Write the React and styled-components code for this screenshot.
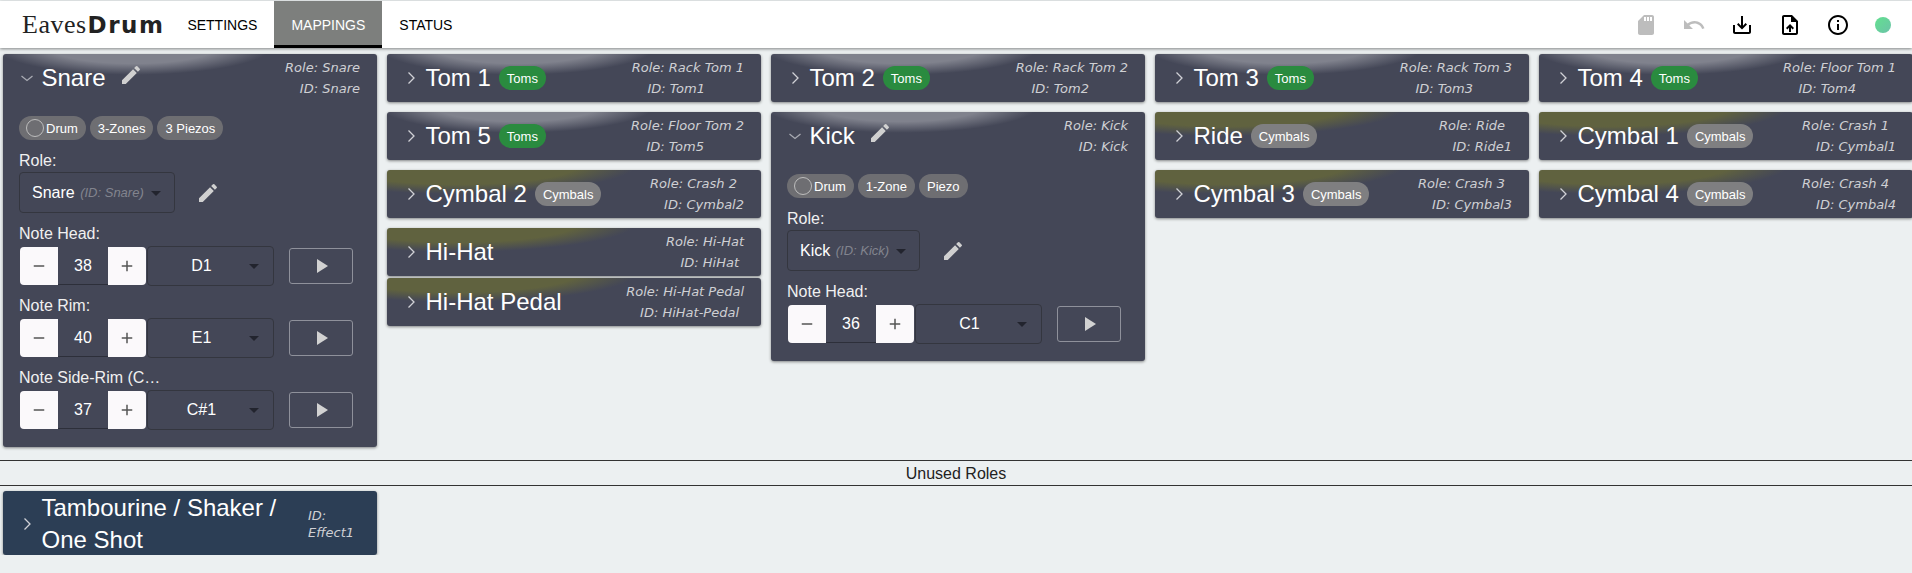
import React from 'react'
import styled, { createGlobalStyle } from 'styled-components'

const paths = {
  edit: 'M3 17.25V21h3.75L17.81 9.94l-3.75-3.75L3 17.25zM20.71 7.04c.39-.39.39-1.02 0-1.41l-2.34-2.34a.9959.9959 0 0 0-1.41 0l-1.83 1.83 3.75 3.75 1.83-1.83z',
  sd: 'M18 2h-8L4.02 8 4 20c0 1.1.9 2 2 2h12c1.1 0 2-.9 2-2V4c0-1.1-.9-2-2-2zm-6 6h-2V4h2v4zm3 0h-2V4h2v4zm3 0h-2V4h2v4z',
  undo: 'M12.5 8c-2.65 0-5.05.99-6.9 2.6L2 7v9h9l-3.62-3.62c1.39-1.16 3.16-1.88 5.12-1.88 3.54 0 6.55 2.31 7.6 5.5l2.37-.78C21.08 11.03 17.15 8 12.5 8z',
  save: 'M19 12v7H5v-7H3v7c0 1.1.9 2 2 2h14c1.1 0 2-.9 2-2v-7h-2zm-6 .67l2.59-2.58L17 11.5l-5 5-5-5 1.41-1.41L11 12.67V3h2v9.67z',
  upload: 'M14 2H6c-1.1 0-1.99.9-1.99 2L4 20c0 1.1.89 2 1.99 2H18c1.1 0 2-.9 2-2V8l-6-6zm4 18H6V4h7v5h5v11zM8 15.01l1.41 1.41L11 14.84V19h2v-4.16l1.59 1.59L16 15.01 12.01 11 8 15.01z',
  info: 'M11 7h2v2h-2zm0 4h2v6h-2zm1-9C6.48 2 2 6.48 2 12s4.48 10 10 10 10-4.48 10-10S17.52 2 12 2zm0 18c-4.41 0-8-3.59-8-8s3.59-8 8-8 8 3.59 8 8-3.59 8-8 8z',
  play: 'M8 5v14l11-7z',
  drop: 'M7 10l5 5 5-5z',
  plus: 'M19 13h-6v6h-2v-6H5v-2h6V5h2v6h6v2z',
  minus: 'M19 13H5v-2h14v2z',
}

const Icon = ({ name, size = 24, color = 'currentColor' }) => (
  <svg width={size} height={size} viewBox="0 0 24 24" fill={color}>
    <path d={paths[name]} />
  </svg>
)

const Chevron = ({ open }) => (
  <svg width="16" height="16" viewBox="0 0 16 16" fill="none" stroke={open ? '#a9abb3' : '#d0d1d6'} strokeWidth="1.3">
    <path d={open ? 'M2.5 6 L8 10.5 L13.5 6' : 'M5.5 2.5 L11 8 L5.5 13.5'} />
  </svg>
)

const toms = 'Toms'
const cymbals = 'Cymbals'

const columns = [
  [
    {
      title: 'Snare', role: 'Snare', id: 'Snare', open: true, zones: '3-Zones', piezos: '3 Piezos',
      notes: [
        { label: 'Note Head:', value: 38, name: 'D1' },
        { label: 'Note Rim:', value: 40, name: 'E1' },
        { label: 'Note Side-Rim (C…', value: 37, name: 'C#1' },
      ],
    },
  ],
  [
    { title: 'Tom 1', chip: toms, role: 'Rack Tom 1', id: 'Tom1', idGap: 39 },
    { title: 'Tom 5', chip: toms, role: 'Floor Tom 2', id: 'Tom5', idGap: 40 },
    { title: 'Cymbal 2', chip: cymbals, role: 'Crash 2', id: 'Cymbal2', roleGap: 7 },
    { title: 'Hi-Hat', olive: true, role: 'Hi-Hat', id: 'HiHat', idGap: 5, tight: true },
    { title: 'Hi-Hat Pedal', olive: true, role: 'Hi-Hat Pedal', id: 'HiHat-Pedal', idGap: 5 },
  ],
  [
    { title: 'Tom 2', chip: toms, role: 'Rack Tom 2', id: 'Tom2', idGap: 39 },
    {
      title: 'Kick', role: 'Kick', id: 'Kick', open: true, zones: '1-Zone', piezos: 'Piezo',
      notes: [{ label: 'Note Head:', value: 36, name: 'C1' }],
    },
  ],
  [
    { title: 'Tom 3', chip: toms, role: 'Rack Tom 3', id: 'Tom3', idGap: 39 },
    { title: 'Ride', chip: cymbals, role: 'Ride', id: 'Ride1', roleGap: 7 },
    { title: 'Cymbal 3', chip: cymbals, role: 'Crash 3', id: 'Cymbal3', roleGap: 7 },
  ],
  [
    { title: 'Tom 4', chip: toms, role: 'Floor Tom 1', id: 'Tom4', idGap: 40 },
    { title: 'Cymbal 1', chip: cymbals, role: 'Crash 1', id: 'Cymbal1', roleGap: 7 },
    { title: 'Cymbal 4', chip: cymbals, role: 'Crash 4', id: 'Cymbal4', roleGap: 7 },
  ],
]

const NoteRow = ({ note }) => (
  <NoteBlock>
    <Label>{note.label}</Label>
    <Controls>
      <Stepper>
        <StepButton><Icon name="minus" size={18} color="#555" /></StepButton>
        <StepValue>{note.value}</StepValue>
        <StepButton><Icon name="plus" size={18} color="#555" /></StepButton>
      </Stepper>
      <NoteSelect>
        <span>{note.name}</span>
        <DropArrow><Icon name="drop" color="#22242e" /></DropArrow>
      </NoteSelect>
      <PlayButton><Icon name="play" color="#d2d2d2" /></PlayButton>
    </Controls>
  </NoteBlock>
)

const Card = ({ item }) => {
  const isCymbal = item.chip === cymbals || item.olive
  return (
    <CardBox $olive={isCymbal} $tight={item.tight}>
      <CardHead>
        <ChevronBox><Chevron open={item.open} /></ChevronBox>
        <Title>{item.title}</Title>
        {item.open && <TitleEdit><Icon name="edit" color="#d0d0d0" /></TitleEdit>}
        {item.chip && <Chip $green={item.chip === toms}>{item.chip}</Chip>}
        <Meta>
          <MetaLine $gap={item.roleGap}>Role: {item.role}</MetaLine>
          <MetaLine $gap={item.idGap}>ID: {item.id}</MetaLine>
        </Meta>
      </CardHead>
      {item.open && (
        <CardBody>
          <Chips>
            <DetailChip>
              <Ring />
              Drum
            </DetailChip>
            <DetailChip>{item.zones}</DetailChip>
            <DetailChip>{item.piezos}</DetailChip>
          </Chips>
          <Label>Role:</Label>
          <RoleRow>
            <RoleSelect>
              {item.role} <RoleHint>(ID: {item.id})</RoleHint>
              <RoleArrow><Icon name="drop" color="#22242e" /></RoleArrow>
            </RoleSelect>
            <Icon name="edit" color="#d0d0d0" />
          </RoleRow>
          {item.notes.map((note) => (
            <NoteRow key={note.label} note={note} />
          ))}
        </CardBody>
      )}
    </CardBox>
  )
}

export default function App() {
  return (
    <>
      <GlobalStyle />
      <TopBar>
        <Logo>
          <LogoLight>Eaves</LogoLight>
          <LogoBold>Drum</LogoBold>
        </Logo>
        <Tab>Settings</Tab>
        <Tab $active>Mappings</Tab>
        <Tab>Status</Tab>
        <Tools>
          <Tool><Icon name="sd" color="#bdbdbd" /></Tool>
          <Tool><Icon name="undo" color="#bdbdbd" /></Tool>
          <Tool><Icon name="save" color="#000" /></Tool>
          <Tool><Icon name="upload" color="#000" /></Tool>
          <Tool><Icon name="info" color="#000" /></Tool>
          <Led />
        </Tools>
      </TopBar>
      <Board>
        {columns.map((col, i) => (
          <Column key={i}>
            {col.map((item) => (
              <Card key={item.title} item={item} />
            ))}
          </Column>
        ))}
      </Board>
      <Divider>Unused Roles</Divider>
      <Unused>
        <EffectCard>
          <ChevronBox><Chevron /></ChevronBox>
          <EffectTitle>Tambourine / Shaker / One Shot</EffectTitle>
          <EffectMeta>ID: Effect1</EffectMeta>
        </EffectCard>
      </Unused>
    </>
  )
}

const GlobalStyle = createGlobalStyle`
  html, body {
    margin: 0;
    padding: 0;
    background: #ecf0f1;
    font-family: "Liberation Sans", Arial, sans-serif;
  }
`

const TopBar = styled.header`
  display: flex;
  align-items: stretch;
  height: 47px;
  margin-top: 1px;
  background: #fff;
  box-shadow: 0 1px 3px rgba(0, 0, 0, 0.45);
`

const Logo = styled.div`
  display: flex;
  align-items: center;
  margin-left: 22px;
  margin-right: 6px;
  color: #222;
`

const LogoLight = styled.span`
  font-family: "Liberation Serif", serif;
  font-size: 26px;
  letter-spacing: 0.5px;
`

const LogoBold = styled.span`
  font-family: "DejaVu Sans", sans-serif;
  font-weight: 700;
  font-size: 23px;
  letter-spacing: 1.5px;
  margin-left: 1px;
`

const Tab = styled.div`
  display: flex;
  align-items: center;
  padding: 3px 17px 0;
  font-size: 14px;
  text-transform: uppercase;
  color: ${(p) => (p.$active ? '#fff' : '#000')};
  background: ${(p) => (p.$active ? '#7d7f7d' : 'transparent')};
  border-bottom: 3px solid ${(p) => (p.$active ? '#000' : 'transparent')};
  box-sizing: border-box;
`

const Tools = styled.div`
  display: flex;
  align-items: center;
  margin-left: auto;
  padding-right: 21px;
`

const Tool = styled.div`
  display: flex;
  align-items: center;
  justify-content: center;
  width: 48px;
`

const Led = styled.div`
  width: 16px;
  height: 16px;
  margin-left: 13px;
  border-radius: 50%;
  background: linear-gradient(135deg, #62e08f, #6cc3a8);
`

const Board = styled.main`
  display: grid;
  grid-template-columns: repeat(5, 374px);
  column-gap: 10px;
  align-items: start;
  padding: 6px 0 3px 3px;
`

const Column = styled.div`
  display: flex;
  flex-direction: column;
`

const CardBox = styled.section`
  margin-bottom: ${(p) => (p.$tight ? '2px' : '10px')};
  border-radius: 3px;
  color: #fff;
  background-color: #444757;
  background-image: ${(p) =>
    p.$olive
      ? 'radial-gradient(ellipse 205px 34px at 70px -6px, #60623f 60%, rgba(96, 98, 63, 0) 88%)'
      : 'radial-gradient(ellipse 155px 32px at 130px -8px, #80828d 55%, rgba(128, 130, 141, 0) 90%)'};
  background-repeat: no-repeat;
  box-shadow: 0 1px 3px rgba(0, 0, 0, 0.45);
`

const CardHead = styled.div`
  display: flex;
  align-items: center;
  height: 48px;
  padding: 0 17px 0 16px;
`

const ChevronBox = styled.div`
  display: flex;
  width: 22.5px;
  flex: none;
`

const Title = styled.div`
  font-size: 24px;
  white-space: nowrap;
`

const TitleEdit = styled.div`
  display: flex;
  margin-left: 13px;
  margin-top: -6px;
`

const Chip = styled.div`
  display: flex;
  align-items: center;
  height: 24px;
  margin-left: 8px;
  padding: 0 8px;
  border-radius: 12px;
  font-size: 13px;
  background: ${(p) => (p.$green ? '#2a8b3f' : '#7f7f81')};
`

const Meta = styled.div`
  margin-left: auto;
  color: #cfd0d4;
  font-family: "DejaVu Sans", sans-serif;
  font-style: italic;
  font-size: 13px;
  line-height: 21px;
  text-align: right;
`

const MetaLine = styled.div`
  margin-right: ${(p) => p.$gap || 0}px;
  white-space: nowrap;
`

const CardBody = styled.div`
  display: flex;
  flex-direction: column;
  padding: 14px 16px 17px;
`

const Chips = styled.div`
  display: flex;
  gap: 4px;
  margin-bottom: 12px;
`

const DetailChip = styled.div`
  display: flex;
  align-items: center;
  height: 24px;
  padding: 0 8px;
  border-radius: 12px;
  font-size: 13px;
  background: #6e6e72;
`

const Ring = styled.span`
  width: 16px;
  height: 16px;
  margin-right: 2px;
  margin-left: -1px;
  border: 1px solid #bdbdbd;
  border-radius: 50%;
`

const Label = styled.div`
  font-size: 16px;
  line-height: 18px;
  color: #f0f0f0;
  white-space: nowrap;
`

const RoleRow = styled.div`
  display: flex;
  align-items: center;
  gap: 21px;
  margin: 2px 0 12px;
`

const RoleSelect = styled.div`
  display: flex;
  align-items: center;
  height: 41px;
  box-sizing: border-box;
  padding-left: 12px;
  padding-right: 6px;
  border: 1px solid #34363f;
  border-radius: 4px;
  font-size: 16px;
  white-space: pre;
`

const RoleHint = styled.span`
  margin-left: 1px;
  font-size: 13px;
  font-style: italic;
  color: #82848e;
`

const RoleArrow = styled.span`
  display: flex;
`

const NoteBlock = styled.div`
  display: flex;
  flex-direction: column;
  gap: 3px;
  margin-bottom: 11px;
  &:last-child {
    margin-bottom: 0;
  }
`

const Controls = styled.div`
  display: flex;
  align-items: center;
`

const Stepper = styled.div`
  display: flex;
  align-items: stretch;
  height: 38px;
  margin-left: 1px;
`

const StepButton = styled.div`
  display: flex;
  align-items: center;
  justify-content: center;
  width: 38px;
  background: #fbf9fb;
  &:first-child {
    border-radius: 4px 0 0 4px;
  }
  &:last-child {
    border-radius: 0 4px 4px 0;
  }
`

const StepValue = styled.div`
  display: flex;
  align-items: center;
  justify-content: center;
  width: 50px;
  font-size: 16px;
  border-bottom: 1px solid #2d2f3a;
`

const NoteSelect = styled.div`
  display: flex;
  align-items: center;
  position: relative;
  justify-content: center;
  width: 127px;
  height: 40px;
  box-sizing: border-box;
  margin-left: 1px;
  padding-right: 18px;
  border: 1px solid #34363f;
  border-radius: 4px;
  font-size: 16px;
`

const DropArrow = styled.span`
  position: absolute;
  right: 7px;
  top: 7px;
  display: flex;
`

const PlayButton = styled.div`
  display: flex;
  align-items: center;
  justify-content: center;
  width: 62px;
  height: 34px;
  margin-left: 15px;
  border: 1px solid #8f919b;
  border-radius: 3px;
`

const Divider = styled.div`
  height: 23px;
  padding-top: 1px;
  line-height: 24px;
  border-top: 1px solid #333;
  border-bottom: 1px solid #333;
  font-size: 16px;
  text-align: center;
  color: #222;
`

const Unused = styled.div`
  padding: 5px 0 0 3px;
`

const EffectCard = styled.section`
  display: flex;
  align-items: center;
  width: 374px;
  height: 64px;
  box-sizing: border-box;
  padding: 2px 16px 0;
  border-radius: 3px;
  color: #fff;
  background: #2c3e55;
  box-shadow: 0 1px 3px rgba(0, 0, 0, 0.45);
`

const EffectTitle = styled.div`
  width: 240px;
  flex: none;
  font-size: 24px;
  line-height: 32px;
`

const EffectMeta = styled.div`
  margin-left: auto;
  width: 53px;
  color: #cfd0d4;
  font-family: "DejaVu Sans", sans-serif;
  font-style: italic;
  font-size: 13px;
  line-height: 17px;
`
